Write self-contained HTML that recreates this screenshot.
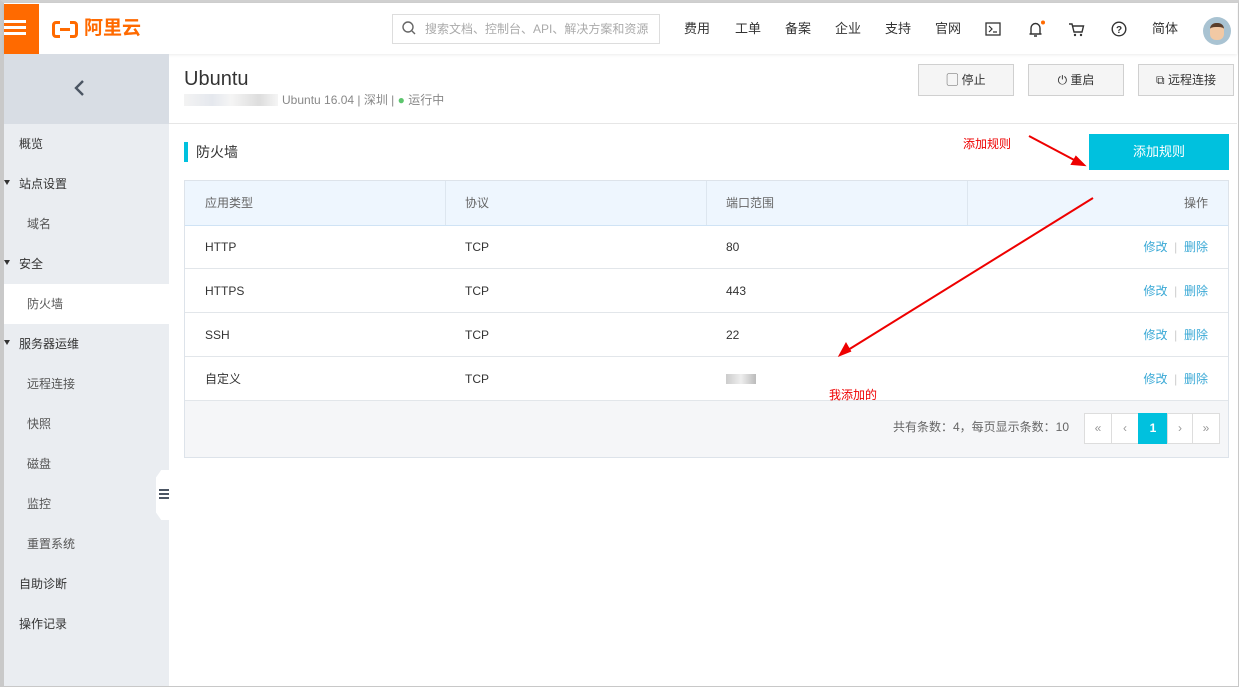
<!DOCTYPE html>
<html><head><meta charset="utf-8"><style>
*{box-sizing:border-box;margin:0;padding:0}
body{width:1239px;height:687px;overflow:hidden;background:#fff;font-family:"Liberation Sans","Noto Sans CJK SC",sans-serif;font-size:12px;color:#333;position:relative;line-height:1.2}
.abs{position:absolute}
.frame{left:0;top:0;width:1239px;height:687px;border:1px solid #c8c8c8;border-left:4px solid #c9c9c9;border-top:3px solid #d0d0d0}
.hdr{left:4px;top:3px;width:1233px;height:51px;background:#fff;box-shadow:0 1px 3px rgba(0,0,0,.08)}
.nav span{position:absolute;top:21px;font-size:13px;color:#333;line-height:16px}
.side{left:4px;top:54px;width:165px;height:632px;background:#eaedf1}
.mi{position:absolute;left:15px;font-size:12px;color:#333;line-height:14px}
.sub{left:23px;color:#555}
.tri{position:absolute;left:0;width:0;height:0;border-left:3px solid transparent;border-right:3px solid transparent;border-top:5px solid #333}
.btn{position:absolute;top:64px;width:96px;height:32px;border:1px solid #d0d0d0;background:#f5f5f5;font-size:12px;color:#333;text-align:center;line-height:30px}
.tbl{left:184px;top:180px;width:1045px;height:278px;border:1px solid #dde3ea}
.row{position:absolute;left:0;width:1043px;height:44px;border-bottom:1px solid #e2e6ea;font-size:12px;line-height:14px}
.row>span{position:absolute;top:15px;line-height:14px}
.op{color:#3aa9d6;font-weight:normal}
.sep{color:#ccc}
.pg{position:absolute;top:413px;height:31px;width:28px;border:1px solid #ddd;background:#fff;text-align:center;line-height:29px;color:#999;font-size:12px}
</style></head><body>
<div class="abs frame"></div>
<div class="abs hdr"></div>
<div class="abs" style="left:4px;top:4px;width:35px;height:50px;background:#ff6a00"></div>
<div class="abs" style="left:4px;top:20px;width:22px;height:3px;background:#fff;box-shadow:0 6px 0 #fff,0 12px 0 #fff"></div>
<div class="abs" style="left:52px;top:21px;width:26px;height:17px;border:3px solid #ff6a00;border-radius:4px"></div>
<div class="abs" style="left:60px;top:20px;width:10px;height:19px;background:#fff"></div>
<div class="abs" style="left:60px;top:28px;width:10px;height:3px;background:#ff6a00"></div>
<div class="abs" style="left:84px;top:18px;font-size:19px;font-weight:bold;color:#ff6a00">阿里云</div>
<div class="abs" style="left:392px;top:14px;width:268px;height:30px;border:1px solid #ddd;background:#fff"></div>
<svg class="abs" style="left:402px;top:21px" width="14" height="15"><circle cx="6" cy="6" r="5" fill="none" stroke="#666" stroke-width="1.4"/><path d="M10 10l3 3" stroke="#666" stroke-width="1.4"/></svg>
<div class="abs" style="left:425px;top:22px;font-size:12px;color:#aaa">搜索文档、控制台、API、解决方案和资源</div>
<div class="nav">
<span style="left:684px">费用</span><span style="left:735px">工单</span><span style="left:785px">备案</span><span style="left:835px">企业</span><span style="left:885px">支持</span><span style="left:935px">官网</span><span style="left:1152px">简体</span></div>
<svg class="abs" style="left:985px;top:22px" width="16" height="14"><rect x="1" y="1" width="14" height="12" fill="none" stroke="#333" stroke-width="1.3"/><path d="M4 4l3 3-3 3M8 10h4" stroke="#333" fill="none" stroke-width="1.2"/></svg>
<svg class="abs" style="left:1027px;top:20px" width="18" height="18"><path d="M4 14V8a4.5 4.5 0 0 1 9 0v6zM2.5 14h12M7 16h3" stroke="#333" fill="none" stroke-width="1.4"/><circle cx="16" cy="2.5" r="2" fill="#ff6a00"/></svg>
<svg class="abs" style="left:1068px;top:22px" width="17" height="15"><path d="M1 2h3l2 8h8l1.5-6H5" stroke="#333" fill="none" stroke-width="1.4"/><circle cx="7" cy="13" r="1.2" fill="#333"/><circle cx="13" cy="13" r="1.2" fill="#333"/></svg>
<svg class="abs" style="left:1111px;top:21px" width="16" height="16"><circle cx="8" cy="8" r="6.8" fill="none" stroke="#333" stroke-width="1.4"/><text x="8" y="12" font-size="10" font-weight="bold" text-anchor="middle" fill="#333" font-family="Liberation Sans">?</text></svg>
<div class="abs" style="left:1203px;top:17px;width:28px;height:28px;border-radius:50%;background:#a9c3d2;overflow:hidden"><div style="margin:6px auto 0;width:14px;height:17px;border-radius:6px;background:#f2c9a4;border-top:4px solid #5a3e2b"></div></div>

<div class="abs side"></div>
<div class="abs" style="left:4px;top:54px;width:165px;height:70px;background:#d8dde4"></div>
<svg class="abs" style="left:72px;top:79px" width="14" height="18"><path d="M11 2L4 9l7 7" stroke="#4b5563" fill="none" stroke-width="2.4"/></svg>
<div class="abs" style="left:4px;top:284px;width:165px;height:40px;background:#fff"></div>
<div class="abs" style="left:4px;top:0;width:165px">
<div class="mi" style="top:137px">概览</div>
<div class="tri" style="top:180px"></div><div class="mi" style="top:177px">站点设置</div>
<div class="mi sub" style="top:217px">域名</div>
<div class="tri" style="top:260px"></div><div class="mi" style="top:257px">安全</div>
<div class="mi sub" style="top:297px">防火墙</div>
<div class="tri" style="top:340px"></div><div class="mi" style="top:337px">服务器运维</div>
<div class="mi sub" style="top:377px">远程连接</div>
<div class="mi sub" style="top:417px">快照</div>
<div class="mi sub" style="top:457px">磁盘</div>
<div class="mi sub" style="top:497px">监控</div>
<div class="mi sub" style="top:537px">重置系统</div>
<div class="mi" style="top:577px">自助诊断</div>
<div class="mi" style="top:617px">操作记录</div>
</div>
<div class="abs" style="left:156px;top:470px;width:13px;height:50px;background:#fff;clip-path:polygon(40% 0,100% 0,100% 100%,40% 100%,0 85%,0 15%)"></div>
<div class="abs" style="left:159px;top:489px;width:10px;height:2px;background:#4b5563;box-shadow:0 4px 0 #4b5563,0 8px 0 #4b5563"></div>

<div class="abs" style="left:184px;top:67px;font-size:20px;color:#333">Ubuntu</div>
<div class="abs" style="left:184px;top:94px;width:94px;height:12px;background:linear-gradient(90deg,#f3f3f3,#e5e8ee 30%,#f5f5f5 50%,#ddd 80%,#f5f5f5)"></div>
<div class="abs" style="left:282px;top:93px;font-size:12px;color:#888">Ubuntu 16.04 | 深圳 | <span style="color:#5cc56d">●</span> 运行中</div>
<div class="btn" style="left:918px">▢ 停止</div>
<div class="btn" style="left:1028px">⏻ 重启</div>
<div class="btn" style="left:1138px">⧉ 远程连接</div>
<div class="abs" style="left:169px;top:123px;width:1068px;height:1px;background:#e6e6e6"></div>

<div class="abs" style="left:184px;top:142px;width:4px;height:20px;background:#00c1de"></div>
<div class="abs" style="left:196px;top:144px;font-size:14px;color:#333">防火墙</div>
<div class="abs" style="left:963px;top:137px;font-size:12px;color:#e00">添加规则</div>
<div class="abs" style="left:1089px;top:134px;width:140px;height:36px;background:#00c1de;color:#fff;font-size:13px;text-align:center;line-height:36px">添加规则</div>

<div class="abs tbl">
<div class="row" style="top:0;background:#eef6fe;border-bottom:1px solid #cfe3f5;height:45px"><span style="left:20px;color:#666">应用类型</span><span style="left:280px;color:#666">协议</span><span style="left:541px;color:#666">端口范围</span><span style="right:20px;color:#666">操作</span>
<div style="position:absolute;left:260px;top:0;width:1px;height:44px;background:#dde6ef"></div><div style="position:absolute;left:521px;top:0;width:1px;height:44px;background:#dde6ef"></div><div style="position:absolute;left:782px;top:0;width:1px;height:44px;background:#dde6ef"></div></div>
<div class="row" style="top:44px"><span style="left:20px">HTTP</span><span style="left:280px">TCP</span><span style="left:541px">80</span><span style="right:20px"><b class="op">修改</b> <i class="sep" style="font-style:normal">&nbsp;|&nbsp;</i> <b class="op">删除</b></span></div>
<div class="row" style="top:88px"><span style="left:20px">HTTPS</span><span style="left:280px">TCP</span><span style="left:541px">443</span><span style="right:20px"><b class="op">修改</b> <i class="sep" style="font-style:normal">&nbsp;|&nbsp;</i> <b class="op">删除</b></span></div>
<div class="row" style="top:132px"><span style="left:20px">SSH</span><span style="left:280px">TCP</span><span style="left:541px">22</span><span style="right:20px"><b class="op">修改</b> <i class="sep" style="font-style:normal">&nbsp;|&nbsp;</i> <b class="op">删除</b></span></div>
<div class="row" style="top:176px"><span style="left:20px">自定义</span><span style="left:280px">TCP</span><span style="left:541px;width:30px;height:10px;top:17px;background:linear-gradient(90deg,#ccc,#eee,#bbb)"></span><span style="right:20px"><b class="op">修改</b> <i class="sep" style="font-style:normal">&nbsp;|&nbsp;</i> <b class="op">删除</b></span></div>
<div style="position:absolute;left:0;top:220px;width:1043px;height:56px;background:#f5f6f8"></div>
</div>
<div class="abs" style="left:893px;top:420px;font-size:12px;color:#666">共有条数：4，每页显示条数：10</div>
<div class="pg" style="left:1084px">«</div><div class="pg" style="left:1111px">‹</div>
<div class="pg" style="left:1138px;width:30px;background:#00c1de;border-color:#00c1de;color:#fff;font-weight:bold">1</div>
<div class="pg" style="left:1167px;width:26px">›</div><div class="pg" style="left:1192px">»</div>
<div class="abs" style="left:829px;top:388px;font-size:12px;color:#e00">我添加的</div>
<svg class="abs" style="left:0;top:0" width="1239" height="687"><g stroke="#e00" stroke-width="2" fill="#e00"><line x1="1029" y1="136" x2="1078" y2="162"/><path d="M1084 165l-12-1 4-7z"/><line x1="1093" y1="198" x2="848" y2="350"/><path d="M840 355l6-11 4 7z"/></g></svg>
</body></html>
